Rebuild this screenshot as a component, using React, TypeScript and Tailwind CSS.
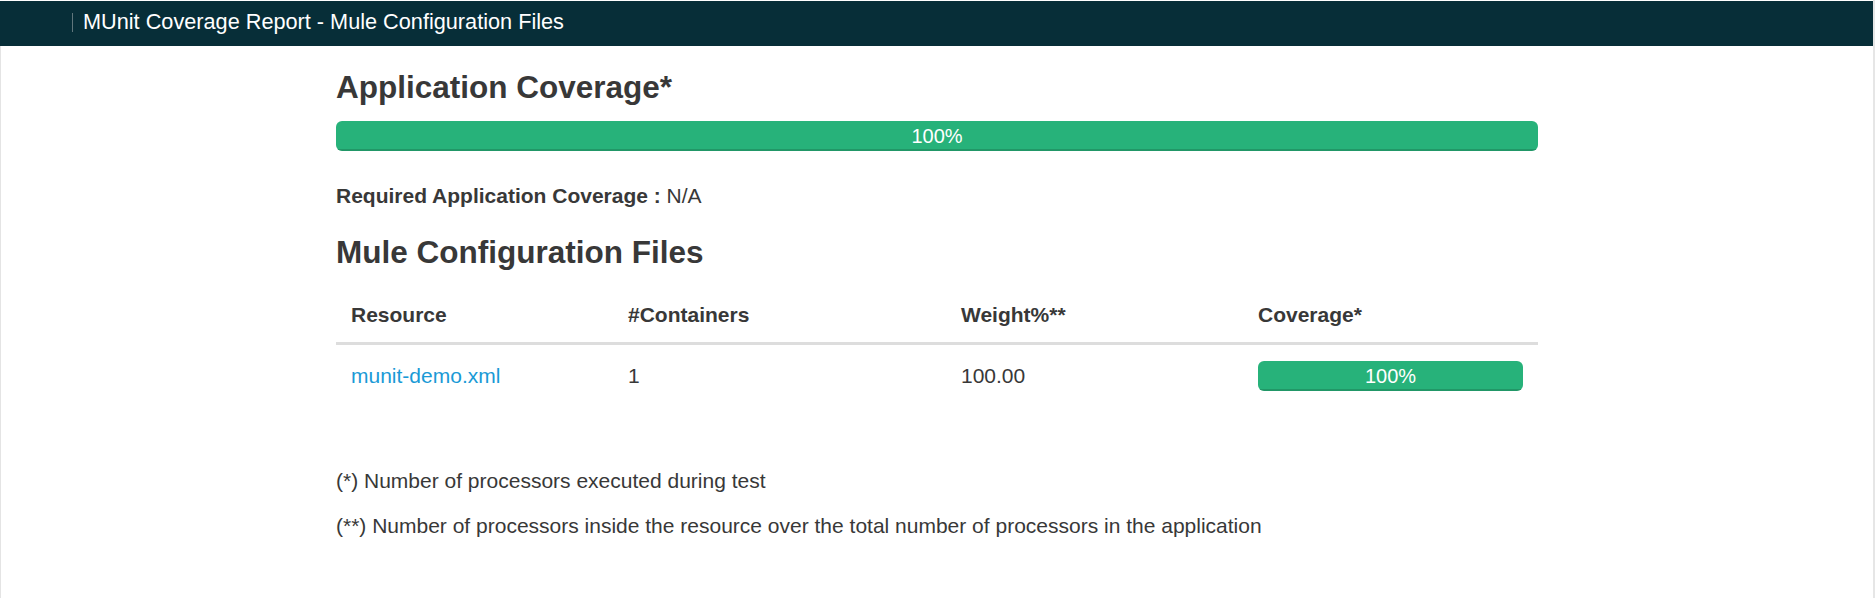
import React from 'react';

type Resource = {
  name: string;
  containers: number;
  weight: string;
  coverage: number;
};

const resources: Resource[] = [
  { name: 'munit-demo.xml', containers: 1, weight: '100.00', coverage: 100 },
];

// Bootstrap-like progress bar
const ProgressBar: React.FC<{ value: number }> = ({ value }) => (
  <div className="h-[30px] w-full overflow-hidden rounded-[6px] bg-[#f5f5f5]">
    <div
      className="flex h-full items-center justify-center bg-[#27b27a] text-[20px] leading-none text-white shadow-[inset_0_-2px_0_rgba(0,0,0,0.15)]"
      style={{ width: `${value}%` }}
    >
      {value}%
    </div>
  </div>
);

const App: React.FC = () => {
  return (
    <div className="flex h-[598px] w-full bg-white font-['Liberation_Sans',Arial,sans-serif] text-[#383838]">
      <div className="flex min-w-0 flex-1 flex-col">
        {/* top bar */}
        <header className="mt-px flex h-[45px] items-start bg-[#072e38] pl-[72px] pt-[6px]">
          <span className="mt-[6px] h-[19px] w-px bg-[#60767c]" />
          <span className="ml-[10px] text-[21.7px] leading-[30px] text-white">
            MUnit Coverage Report - Mule Configuration Files
          </span>
        </header>

        <div className="flex-1 border-l border-[#e4e4e4]">
          <main className="mx-auto w-[1202px] pt-[24px]">
            <h2 className="text-[31.5px] font-bold leading-[1.1]">Application Coverage*</h2>
            <div className="mt-[16px]">
              <ProgressBar value={100} />
            </div>

            <p className="mt-[30px] text-[21px] leading-[30px]">
              <span className="font-bold">Required Application Coverage : </span>N/A
            </p>

            <h2 className="mt-[24px] text-[31.5px] font-bold leading-[1.1]">Mule Configuration Files</h2>

            <table className="mt-[19px] w-full table-fixed border-collapse text-[21px] leading-[30px]">
              <colgroup>
                <col className="w-[277px]" />
                <col className="w-[333px]" />
                <col className="w-[297px]" />
                <col className="w-[295px]" />
              </colgroup>
              <thead>
                <tr className="border-b-[3px] border-[#ddd]">
                  <th className="px-[15px] pb-[12px] pt-[12px] text-left font-bold">Resource</th>
                  <th className="px-[15px] pb-[12px] pt-[12px] text-left font-bold">#Containers</th>
                  <th className="px-[15px] pb-[12px] pt-[12px] text-left font-bold">Weight%**</th>
                  <th className="px-[15px] pb-[12px] pt-[12px] text-left font-bold">Coverage*</th>
                </tr>
              </thead>
              <tbody>
                {resources.map((r) => (
                  <tr key={r.name}>
                    <td className="px-[15px] pb-[12px] pt-[16px] align-top">
                      <a href="#" className="text-[#1a9ad6]">
                        {r.name}
                      </a>
                    </td>
                    <td className="px-[15px] pb-[12px] pt-[16px] align-top">{r.containers}</td>
                    <td className="px-[15px] pb-[12px] pt-[16px] align-top">{r.weight}</td>
                    <td className="px-[15px] pb-[12px] pt-[16px] align-top">
                      <ProgressBar value={r.coverage} />
                    </td>
                  </tr>
                ))}
              </tbody>
            </table>

            <div className="mt-[63px] text-[21px] leading-[30px]">
              <p className="mb-[15px]">(*) Number of processors executed during test</p>
              <p className="mb-[15px]">
                (**) Number of processors inside the resource over the total number of processors in the application
              </p>
            </div>
          </main>
        </div>
      </div>
      <div className="w-[2px] shrink-0 bg-[#e6e6e6]" />
    </div>
  );
};

export default App;
